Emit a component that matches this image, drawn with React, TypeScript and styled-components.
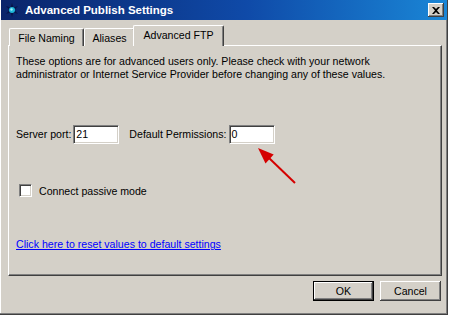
import React from 'react';
import styled, { createGlobalStyle } from 'styled-components';

const GlobalStyle = createGlobalStyle`
  html, body {
    margin: 0;
    padding: 0;
    background: #ffffff;
  }
  body {
    font-family: "Liberation Sans", Arial, sans-serif;
    font-size: 10.6px;
    color: #000000;
  }
`;

const Window = styled.div`
  width: 448px;
  height: 315px;
  box-sizing: border-box;
  background: #d4d0c8;
  display: flex;
  flex-direction: column;
  padding: 0 2px 2px 2px;
  box-shadow: inset -1px -1px 0 #404040, inset -2px -2px 0 #808080, inset 1px 0 0 #ffffff;
`;

const TitleBar = styled.div`
  height: 20px;
  margin: 0 -1px 0 -1px;
  display: flex;
  align-items: center;
  padding: 0 3px 0 4px;
  background: linear-gradient(to right, #0a246a 0%, #0f4aa8 55%, #1a86d6 100%);
  color: #ffffff;
`;

const TitleText = styled.span`
  font-weight: bold;
  font-size: 11.5px;
  margin-left: 6px;
  flex: 1;
`;

const CloseButton = styled.div`
  width: 16px;
  height: 14px;
  box-sizing: border-box;
  background: #d4d0c8;
  display: flex;
  align-items: center;
  justify-content: center;
  box-shadow: inset -1px -1px 0 #404040, inset 1px 1px 0 #ffffff, inset -2px -2px 0 #808080;
`;

const Body = styled.div`
  flex: 1;
  display: flex;
  flex-direction: column;
  padding: 6px 4px 0 6px;
`;

const TabStrip = styled.div`
  display: flex;
  align-items: flex-end;
  height: 20px;
  padding-left: 1px;
  position: relative;
  z-index: 1;
`;

const Tab = styled.div<{ $active?: boolean; $width: number }>`
  box-sizing: border-box;
  width: ${({ $width }) => $width}px;
  height: ${({ $active }) => ($active ? '21px' : '18px')};
  margin: ${({ $active }) => ($active ? '0 -2px 0 -2px' : '0')};
  display: flex;
  align-items: center;
  justify-content: center;
  padding-bottom: ${({ $active }) => ($active ? '2px' : '0')};
  background: #d4d0c8;
  border-top: 1px solid #ffffff;
  border-left: 1px solid #ffffff;
  border-right: 1px solid #404040;
  box-shadow: inset -1px 0 0 #808080;
  border-radius: 2px 2px 0 0;
  position: relative;
  z-index: ${({ $active }) => ($active ? 2 : 1)};
  white-space: nowrap;
`;

const Panel = styled.div`
  position: relative;
  width: 434px;
  height: 231px;
  box-sizing: border-box;
  border-top: 1px solid #ffffff;
  border-left: 1px solid #ffffff;
  border-right: 1px solid #404040;
  border-bottom: 1px solid #404040;
  box-shadow: inset -1px -1px 0 #808080;
  margin-top: -1px;
  padding: 9px 7px 0 7px;
  display: flex;
  flex-direction: column;
`;

const Description = styled.p`
  margin: 0;
  line-height: 13px;
  white-space: nowrap;
`;

const FieldRow = styled.div`
  display: flex;
  align-items: center;
  margin-top: 44px;
  height: 18px;
`;

const FieldLabel = styled.span`
  margin-right: 2px;
`;

const TextBox = styled.div<{ $gap?: number }>`
  width: 46px;
  height: 19px;
  box-sizing: border-box;
  background: #ffffff;
  border-top: 1px solid #808080;
  border-left: 1px solid #808080;
  border-right: 1px solid #ffffff;
  border-bottom: 1px solid #ffffff;
  box-shadow: inset 1px 1px 0 #404040, inset -1px -1px 0 #d4d0c8;
  display: flex;
  align-items: center;
  padding-left: 2px;
  margin-right: ${({ $gap }) => $gap ?? 0}px;
`;

const CheckRow = styled.div`
  display: flex;
  align-items: center;
  margin-top: 41px;
  padding-left: 3px;
`;

const CheckBox = styled.div`
  width: 13px;
  height: 13px;
  box-sizing: border-box;
  background: #ffffff;
  border-top: 1px solid #808080;
  border-left: 1px solid #808080;
  border-right: 1px solid #ffffff;
  border-bottom: 1px solid #ffffff;
  box-shadow: inset 1px 1px 0 #404040, inset -1px -1px 0 #d4d0c8;
  margin-right: 7px;
`;

const ResetLink = styled.a`
  margin-top: 41px;
  color: #0000ff;
  text-decoration: underline;
  cursor: pointer;
  align-self: flex-start;
`;

const Arrow = styled.svg`
  position: absolute;
  left: 240px;
  top: 93px;
`;

const Footer = styled.div`
  display: flex;
  justify-content: flex-end;
  gap: 6px;
  padding-top: 5px;
  padding-right: 1px;
`;

const Button = styled.div<{ $default?: boolean }>`
  width: 61px;
  height: 20px;
  box-sizing: border-box;
  display: flex;
  align-items: center;
  justify-content: center;
  background: #d4d0c8;
  box-shadow: inset -1px -1px 0 #404040, inset 1px 1px 0 #ffffff, inset -2px -2px 0 #808080;
  ${({ $default }) => ($default ? 'border: 1px solid #000000;' : '')}
`;

const AppIcon = () => (
  <svg width="14" height="14" viewBox="0 0 14 14">
    <path d="M7 0 L8.5 4.5 L13 3 L9.5 7 L13 11 L8.5 9.5 L7 14 L5.5 9.5 L1 11 L4.5 7 L1 3 L5.5 4.5 Z" fill="#061447" />
    <circle cx="7" cy="7" r="3" fill="#1fb7d8" />
    <circle cx="6.5" cy="6.5" r="1.2" fill="#9ff0ff" />
  </svg>
);

export default function App() {
  return (
    <>
      <GlobalStyle />
      <Window>
        <TitleBar>
          <AppIcon />
          <TitleText>Advanced Publish Settings</TitleText>
          <CloseButton>
            <svg width="8" height="7" viewBox="0 0 8 7">
              <path d="M0 0 L2 0 L4 2 L6 0 L8 0 L5 3.5 L8 7 L6 7 L4 5 L2 7 L0 7 L3 3.5 Z" fill="#000000" />
            </svg>
          </CloseButton>
        </TitleBar>
        <Body>
          <TabStrip>
            <Tab $width={75}>File Naming</Tab>
            <Tab $width={51}>Aliases</Tab>
            <Tab $active $width={91}>Advanced FTP</Tab>
          </TabStrip>
          <Panel>
            <Description>
              These options are for advanced users only. Please check with your network
              <br />
              administrator or Internet Service Provider before changing any of these values.
            </Description>
            <FieldRow>
              <FieldLabel>Server port:</FieldLabel>
              <TextBox $gap={10}>21</TextBox>
              <FieldLabel>Default Permissions:</FieldLabel>
              <TextBox>0</TextBox>
            </FieldRow>
            <CheckRow>
              <CheckBox />
              <span>Connect passive mode</span>
            </CheckRow>
            <ResetLink>Click here to reset values to default settings</ResetLink>
            <Arrow width="60" height="50" viewBox="0 0 60 50">
              <line x1="20" y1="19" x2="46" y2="44" stroke="#d40000" strokeWidth="2" />
              <polygon points="9,9 24.7,15.6 16.5,24.4" fill="#d40000" />
            </Arrow>
          </Panel>
          <Footer>
            <Button $default>OK</Button>
            <Button>Cancel</Button>
          </Footer>
        </Body>
      </Window>
    </>
  );
}
